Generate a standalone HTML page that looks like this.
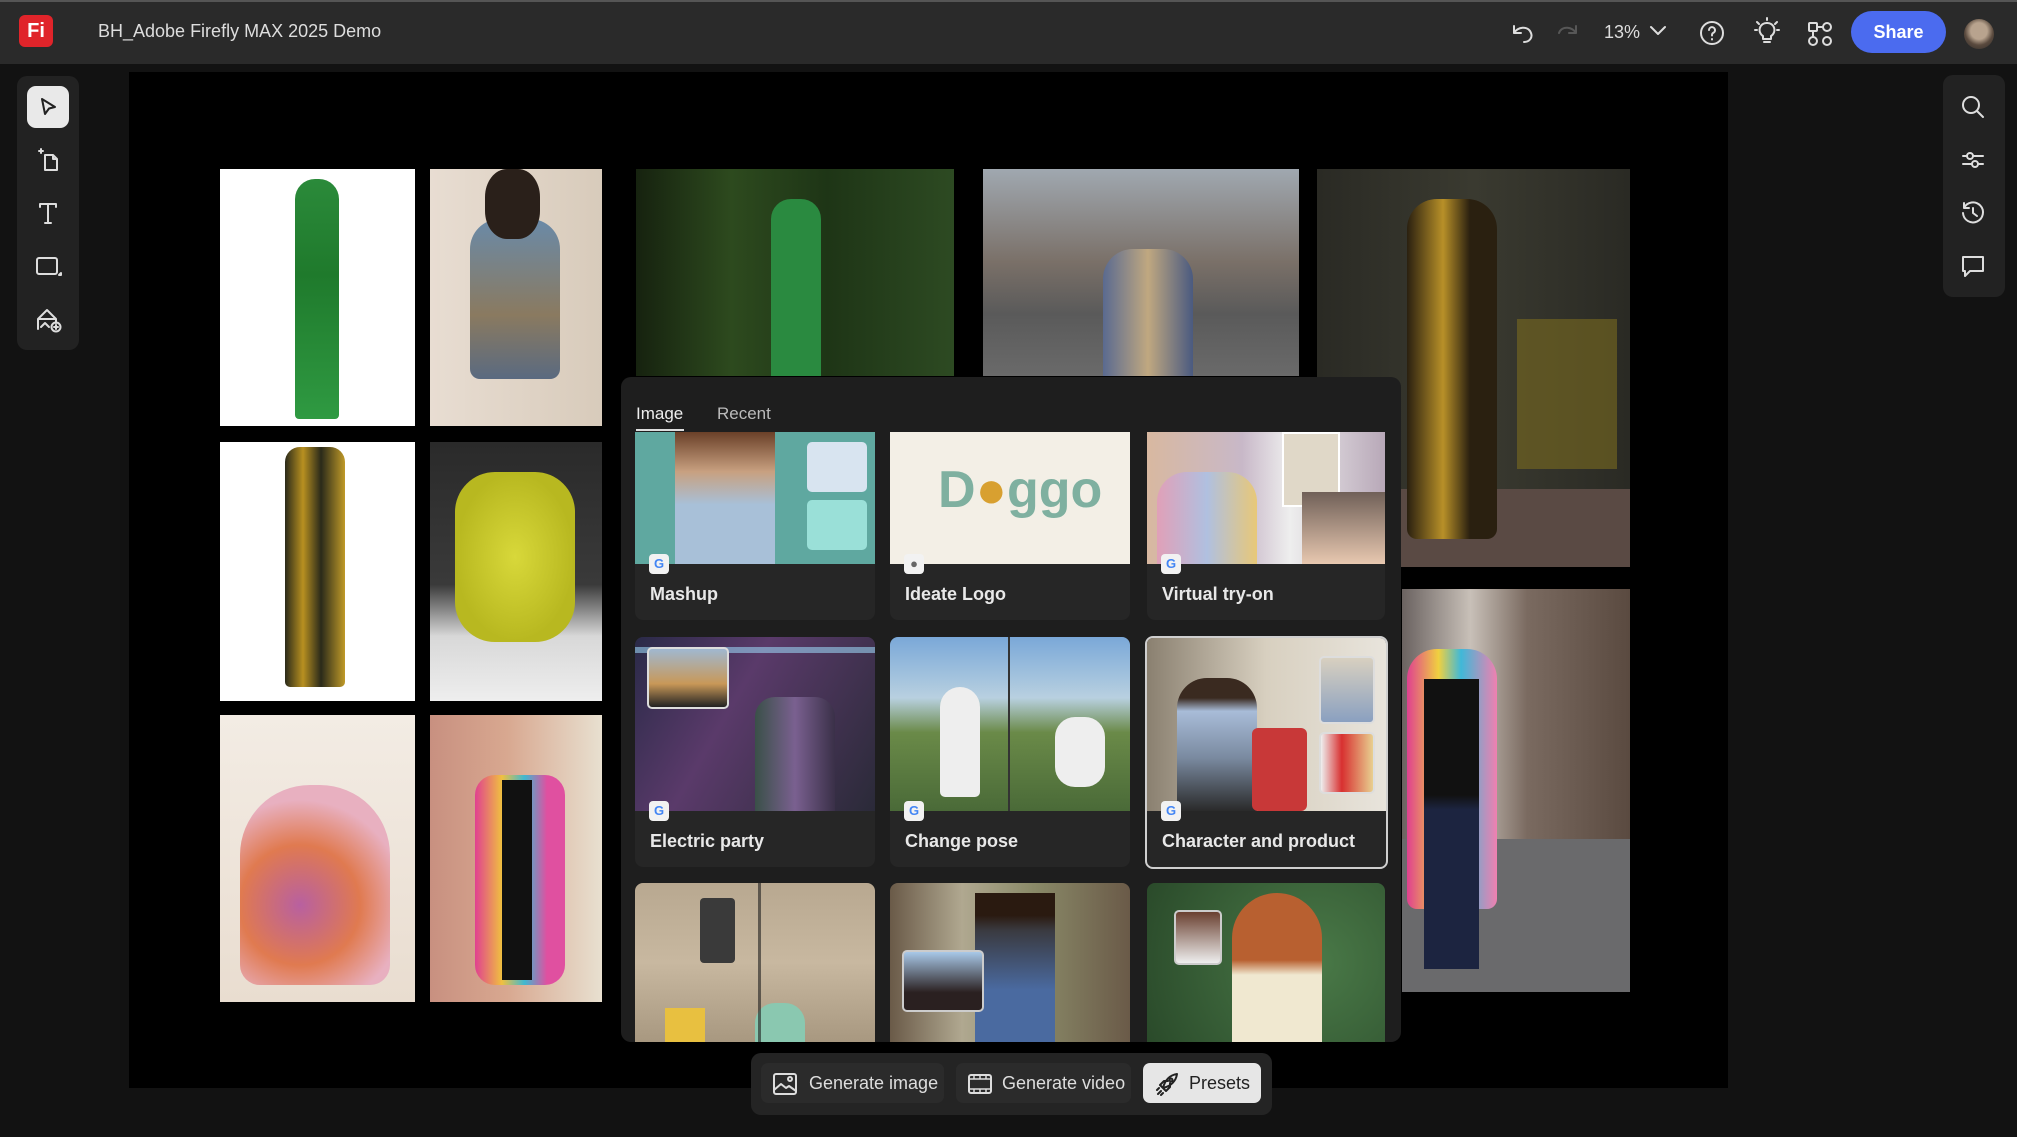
<!DOCTYPE html>
<html><head><meta charset="utf-8"><style>
*{margin:0;padding:0;box-sizing:border-box}
body{width:2017px;height:1137px;background:#121212;position:relative;overflow:hidden;font-family:"Liberation Sans",sans-serif;color:#e6e6e6}
.a{position:absolute}
.top{left:0;top:0;width:2017px;height:64px;background:#2a2a2a;border-top:2px solid #555}
.ico{position:absolute;stroke:#ddd;fill:none;stroke-width:2;stroke-linecap:round;stroke-linejoin:round}
.img{position:absolute;overflow:hidden}
.card{position:absolute;background:#262626;border-radius:8px;overflow:hidden}
.card .pic{position:absolute;left:0;top:0;right:0;overflow:hidden}
.card .lab{position:absolute;left:15px;font-size:18px;font-weight:bold;color:#e8e8e8}
.g{position:absolute;left:14px;width:20px;height:20px;background:#f2f2f2;border-radius:4px;font-size:13px;font-weight:bold;color:#4285f4;text-align:center;line-height:20px}
.btn{position:absolute;top:1063px;height:40px;border-radius:7px;font-size:18px;line-height:40px;color:#ddd;background:#2b2b2b}
</style></head><body>
<div class="a top"></div>
<div class="a" style="left:19px;top:15px;width:34px;height:32px;background:#e0242a;border-radius:6px;color:#fff;font-weight:bold;font-size:20px;text-align:center;line-height:32px">Fi</div>
<div class="a" style="left:98px;top:21px;font-size:18px;color:#ddd">BH_Adobe Firefly MAX 2025 Demo</div>
<svg class="ico" style="left:1510px;top:20px" width="26" height="26" viewBox="0 0 26 26"><path d="M4 6v7h7M4 13c3-6 14-8 17 0c2 5-2 9-7 9"/></svg>
<svg class="ico" style="left:1554px;top:20px;opacity:.25" width="26" height="26" viewBox="0 0 26 26"><path d="M22 6v7h-7M22 13c-3-6-14-8-17 0"/></svg>
<div class="a" style="left:1604px;top:22px;font-size:18px;color:#ddd">13%</div>
<svg class="ico" style="left:1648px;top:24px" width="20" height="14" viewBox="0 0 20 14"><path d="M3 3l7 7 7-7"/></svg>
<svg class="ico" style="left:1699px;top:20px" width="26" height="26" viewBox="0 0 26 26"><circle cx="13" cy="13" r="11"/><path d="M10 10a3 3 0 1 1 4 3c-1 .5-1 1.5-1 2.5M13 19v.5"/></svg>
<svg class="ico" style="left:1753px;top:17px" width="28" height="30" viewBox="0 0 28 30"><path d="M14 6a7 7 0 0 0-4 13v3h8v-3a7 7 0 0 0-4-13zM11 25h6M14 1v2M4 5l2 2M24 5l-2 2M2 13h2M24 13h2"/></svg>
<svg class="ico" style="left:1806px;top:20px" width="28" height="28" viewBox="0 0 28 28"><rect x="3" y="3" width="8" height="8" rx="1"/><circle cx="21" cy="7" r="4"/><circle cx="7" cy="21" r="4"/><circle cx="21" cy="21" r="4"/><path d="M7 11v6M11 7h6"/></svg>
<div class="a" style="left:1851px;top:11px;width:95px;height:42px;background:#4b6bef;border-radius:21px;color:#fff;font-weight:bold;font-size:18px;text-align:center;line-height:42px">Share</div>
<div class="a" style="left:1964px;top:19px;width:30px;height:30px;border-radius:50%;background:radial-gradient(circle at 50% 40%,#b8a38e 0 35%,#5a4a3e 60%,#2d2a28)"></div>

<!-- left toolbar -->
<div class="a" style="left:17px;top:76px;width:62px;height:274px;background:#222;border-radius:10px"></div>
<div class="a" style="left:27px;top:86px;width:42px;height:42px;background:#e9e9e9;border-radius:9px"></div>
<svg class="a" style="left:36px;top:95px" width="24" height="24" viewBox="0 0 24 24"><path d="M6 4l13 8-6 1.5-4 5.5z" fill="none" stroke="#222" stroke-width="2" stroke-linejoin="round"/></svg>
<svg class="ico" style="left:35px;top:147px" width="26" height="26" viewBox="0 0 26 26"><path d="M10 8h8l4 4v11H10zM18 8v4h4M4 4h4M6 2v4"/></svg>
<svg class="ico" style="left:35px;top:200px" width="26" height="26" viewBox="0 0 26 26"><path d="M5 4h16M13 4v19M10 23h6M5 4v3M21 4v3"/></svg>
<svg class="ico" style="left:35px;top:254px" width="28" height="26" viewBox="0 0 28 26"><rect x="2" y="4" width="20" height="16" rx="2"/><path d="M24 21l2-2v2z" fill="#ddd"/></svg>
<svg class="ico" style="left:35px;top:307px" width="28" height="26" viewBox="0 0 28 26"><path d="M3 22V12h18v4M3 12l9-9 9 9M6 20l4-4 4 4"/><circle cx="21" cy="20" r="4.5"/><path d="M21 18v4M19 20h4"/></svg>

<!-- right toolbar -->
<div class="a" style="left:1943px;top:75px;width:62px;height:222px;background:#222;border-radius:10px"></div>
<svg class="ico" style="left:1960px;top:94px" width="26" height="26" viewBox="0 0 26 26"><circle cx="11" cy="11" r="8"/><path d="M17 17l6 6"/></svg>
<svg class="ico" style="left:1960px;top:147px" width="26" height="26" viewBox="0 0 26 26"><path d="M3 9h20M3 17h20"/><circle cx="10" cy="9" r="3" fill="#222"/><circle cx="15" cy="17" r="3" fill="#222"/></svg>
<svg class="ico" style="left:1960px;top:200px" width="26" height="26" viewBox="0 0 26 26"><path d="M4 8a10 10 0 1 1-1 5M4 3v5h5M13 8v5l4 3"/></svg>
<svg class="ico" style="left:1960px;top:253px" width="26" height="26" viewBox="0 0 26 26"><path d="M3 4h20v14H10l-5 5v-5H3z"/></svg>

<!-- canvas -->
<div class="a" style="left:129px;top:72px;width:1599px;height:1016px;background:#000"></div>

<!-- images -->
<div class="img" style="left:220px;top:169px;width:195px;height:257px;background:#fff"><div class="a" style="left:75px;top:10px;width:44px;height:240px;background:linear-gradient(#2b8a3a,#1f7a2c 40%,#2f9a42);border-radius:20px 20px 4px 4px"></div></div>
<div class="img" style="left:430px;top:169px;width:172px;height:257px;background:linear-gradient(90deg,#e8ddd2,#d8cbbb)"><div class="a" style="left:40px;top:50px;width:90px;height:160px;background:linear-gradient(#6a8aa8,#8a7a60 60%,#5a6a80);border-radius:30px 30px 10px 10px"></div><div class="a" style="left:55px;top:0;width:55px;height:70px;background:#2a201a;border-radius:40%"></div></div>
<div class="img" style="left:220px;top:442px;width:195px;height:259px;background:#fff"><div class="a" style="left:65px;top:5px;width:60px;height:240px;background:linear-gradient(90deg,#2a2a1a,#b89020 30%,#2a2a1a 60%,#c09a28);border-radius:15px 15px 5px 5px"></div></div>
<div class="img" style="left:430px;top:442px;width:172px;height:259px;background:linear-gradient(#2a2a2a,#3a3a3a 55%,#d8d8d8 75%,#eee)"><div class="a" style="left:25px;top:30px;width:120px;height:170px;background:radial-gradient(#d8d83a,#b8b820 70%);border-radius:40px"></div></div>
<div class="img" style="left:220px;top:715px;width:195px;height:287px;background:linear-gradient(#f3ece4,#e9ddd0)"><div class="a" style="left:20px;top:70px;width:150px;height:200px;background:radial-gradient(circle at 40% 60%,#b860a0,#e07a50 40%,#e8b0c0 70%);border-radius:70px 70px 20px 20px"></div></div>
<div class="img" style="left:430px;top:715px;width:172px;height:287px;background:linear-gradient(90deg,#c89080,#d8a890 45%,#e8e0d0)"><div class="a" style="left:45px;top:60px;width:90px;height:210px;background:linear-gradient(90deg,#e04090,#f0c040 30%,#40b8d0 55%,#e050a0 80%);border-radius:20px"></div><div class="a" style="left:72px;top:65px;width:30px;height:200px;background:#111"></div></div>
<div class="img" style="left:636px;top:169px;width:318px;height:207px;background:linear-gradient(90deg,#16220f,#2d4a1e 30%,#1e3516 60%,#2d4a22)"><div class="a" style="left:135px;top:30px;width:50px;height:180px;background:#2a8a40;border-radius:20px 20px 0 0"></div></div>
<div class="img" style="left:983px;top:169px;width:316px;height:207px;background:linear-gradient(#a0a8b0,#7a7068 45%,#5a5a5a 70%,#6a6a6a)"><div class="a" style="left:120px;top:80px;width:90px;height:127px;background:linear-gradient(90deg,#5a6a90,#c0a880,#4a5a80);border-radius:30px 30px 0 0"></div></div>
<div class="img" style="left:1317px;top:169px;width:313px;height:398px;background:linear-gradient(90deg,#2a2a24,#3a3a30 50%,#2a2a24);"><div class="a" style="left:0;top:320px;width:313px;height:78px;background:#5a4a44"></div><div class="a" style="left:90px;top:30px;width:90px;height:340px;background:linear-gradient(90deg,#2a2010,#b89028 40%,#2a2010 70%);border-radius:30px 30px 10px 10px"></div><div class="a" style="left:200px;top:150px;width:100px;height:150px;background:#7a6a20;opacity:.6"></div></div>
<div class="img" style="left:1402px;top:589px;width:228px;height:403px;background:linear-gradient(90deg,#6a6260,#c8c0b8 30%,#7a6a60 55%,#5a4a40);"><div class="a" style="left:0;top:250px;width:228px;height:153px;background:#6a6a6c"></div><div class="a" style="left:5px;top:60px;width:90px;height:260px;background:linear-gradient(90deg,#e04090,#f0d040 35%,#40b8d8 60%,#f080b0);border-radius:30px 30px 10px 10px"></div><div class="a" style="left:22px;top:90px;width:55px;height:290px;background:linear-gradient(#111 40%,#1c2440 45%)"></div></div>

<!-- popup -->
<div class="a" style="left:621px;top:377px;width:780px;height:665px;background:#1e1e1e;border-radius:10px;overflow:hidden">
 <div class="a" style="left:15px;top:27px;font-size:17px;color:#eee">Image</div>
 <div class="a" style="left:96px;top:27px;font-size:17px;color:#bbb">Recent</div>
 <div class="a" style="left:15px;top:52px;width:48px;height:2px;background:#ddd"></div>
</div>
<!-- row1 -->
<div class="card" style="left:635px;top:432px;width:240px;height:188px;border-radius:0 0 8px 8px"><div class="pic" style="height:132px;background:#5fa8a0"><div class="a" style="left:40px;top:0;width:100px;height:132px;background:linear-gradient(#6a4028,#c8a080 30%,#a8c0d8 55%)"></div><div class="a" style="left:172px;top:10px;width:60px;height:50px;background:#d8e4f0;border-radius:5px"></div><div class="a" style="left:172px;top:68px;width:60px;height:50px;background:#9ae0d8;border-radius:5px"></div></div><div class="g" style="top:122px">G</div><div class="lab" style="top:152px">Mashup</div></div>
<div class="card" style="left:890px;top:432px;width:240px;height:188px;border-radius:0 0 8px 8px"><div class="pic" style="height:132px;background:#f3efe6"><div class="a" style="left:48px;top:28px;font-size:52px;font-weight:bold;color:#7fb0a0">D<span style="color:#d8a030">●</span>ggo</div></div><div class="g" style="top:122px;color:#666">●</div><div class="lab" style="top:152px">Ideate Logo</div></div>
<div class="card" style="left:1147px;top:432px;width:238px;height:188px;border-radius:0 0 8px 8px"><div class="pic" style="height:132px;background:linear-gradient(90deg,#d8b8a0,#c8b8c8 40%,#eee 60%,#b8a8b8)"><div class="a" style="left:10px;top:40px;width:100px;height:92px;background:linear-gradient(90deg,#e0a0b8,#b0c0e0 50%,#e8c878);border-radius:30px 30px 0 0"></div><div class="a" style="left:135px;top:0;width:58px;height:75px;background:#e0d8c8;border:2px solid #fff"></div><div class="a" style="left:155px;top:60px;width:83px;height:72px;background:linear-gradient(#706058,#e8c8b0)"></div></div><div class="g" style="top:122px">G</div><div class="lab" style="top:152px">Virtual try-on</div></div>
<!-- row2 -->
<div class="card" style="left:635px;top:637px;width:240px;height:230px"><div class="pic" style="height:174px;background:linear-gradient(120deg,#2a2a48,#5a3a6a 40%,#2a2a38)"><div class="a" style="left:0;top:10px;width:240px;height:6px;background:#9ad0f0;opacity:.6"></div><div class="a" style="left:12px;top:10px;width:82px;height:62px;background:linear-gradient(#a0b8d0,#c89858 60%,#222);border:2px solid #ddd;border-radius:5px"></div><div class="a" style="left:120px;top:60px;width:80px;height:114px;background:linear-gradient(90deg,#3a5048,#7a6090,#3a3048);border-radius:20px 20px 0 0"></div></div><div class="g" style="top:164px">G</div><div class="lab" style="top:194px">Electric party</div></div>
<div class="card" style="left:890px;top:637px;width:240px;height:230px"><div class="pic" style="height:174px;background:linear-gradient(#7aa8d8,#b8d0e0 35%,#6a8a48 55%,#4a6a38)"><div class="a" style="left:118px;top:0;width:2px;height:174px;background:#333"></div><div class="a" style="left:50px;top:50px;width:40px;height:110px;background:#eee;border-radius:20px 20px 5px 5px"></div><div class="a" style="left:165px;top:80px;width:50px;height:70px;background:#eee;border-radius:20px"></div></div><div class="g" style="top:164px">G</div><div class="lab" style="top:194px">Change pose</div></div>
<div class="card" style="left:1145px;top:636px;width:243px;height:233px;border:2px solid #cfcfcf"><div class="pic" style="height:173px;background:linear-gradient(90deg,#8a8070,#d8d0c0 50%,#e8e4dc)"><div class="a" style="left:30px;top:40px;width:80px;height:133px;background:linear-gradient(#3a2a20 15%,#a8bcd8 25%,#7a8aa0 60%,#2a2a2a);border-radius:30px 30px 0 0"></div><div class="a" style="left:105px;top:90px;width:55px;height:83px;background:#c83838;border-radius:6px"></div><div class="a" style="left:172px;top:18px;width:56px;height:68px;background:linear-gradient(#d8d0c0,#8aa0c0);border:2px solid #ddd;border-radius:5px"></div><div class="a" style="left:172px;top:94px;width:56px;height:62px;background:linear-gradient(90deg,#eee,#d83030 40%,#e8d090);border:2px solid #ddd;border-radius:5px"></div></div><div class="g" style="top:163px">G</div><div class="lab" style="top:193px">Character and product</div></div>
<!-- row3 -->
<div class="card" style="left:635px;top:883px;width:240px;height:159px;border-radius:8px 8px 0 0;background:linear-gradient(#b8a890,#c8b8a0 50%,#a89880)"><div class="a" style="left:65px;top:15px;width:35px;height:65px;background:#3a3a3a;border-radius:4px"></div><div class="a" style="left:120px;top:120px;width:50px;height:39px;background:#8ac8b0;border-radius:20px 20px 0 0"></div><div class="a" style="left:30px;top:125px;width:40px;height:34px;background:#e8c040"></div><div class="a" style="left:123px;top:0;width:3px;height:159px;background:#1e1e1e;opacity:.6"></div></div>
<div class="card" style="left:890px;top:883px;width:240px;height:159px;border-radius:8px 8px 0 0;background:linear-gradient(90deg,#6a5a48,#b0a890 30%,#8a8a68 60%,#6a5a48)"><div class="a" style="left:85px;top:10px;width:80px;height:149px;background:linear-gradient(#2a1a10 15%,#3a3a40 25%,#4a6aa0 65%)"></div><div class="a" style="left:12px;top:67px;width:82px;height:62px;background:linear-gradient(#a8c8e8,#2a2020 70%);border:2px solid #ccc;border-radius:5px"></div></div>
<div class="card" style="left:1147px;top:883px;width:238px;height:159px;border-radius:8px 8px 0 0;background:radial-gradient(circle at 70% 50%,#4a7a48,#2a4a2a)"><div class="a" style="left:85px;top:10px;width:90px;height:149px;background:linear-gradient(#b86030 45%,#f0e8d0 55%);border-radius:45px 45px 0 0"></div><div class="a" style="left:27px;top:27px;width:48px;height:55px;background:linear-gradient(#6a4030,#eee);border:2px solid #ccc;border-radius:5px"></div></div>

<!-- bottom bar -->
<div class="a" style="left:751px;top:1053px;width:521px;height:62px;background:#242424;border-radius:10px"></div>
<div class="btn" style="left:761px;width:183px"><svg class="ico" style="left:12px;top:10px" width="24" height="22" viewBox="0 0 24 22"><rect x="1" y="1" width="22" height="20" rx="2"/><path d="M1 17l7-6 5 4 3-2 7 5"/><circle cx="17" cy="6" r="2"/></svg><span style="position:absolute;left:48px">Generate image</span></div>
<div class="btn" style="left:956px;width:175px"><svg class="ico" style="left:12px;top:11px" width="24" height="20" viewBox="0 0 24 20"><rect x="1" y="1" width="22" height="18" rx="2"/><path d="M1 5h22M1 15h22M6 1v4M12 1v4M18 1v4M6 15v4M12 15v4M18 15v4" stroke-width="1.5"/></svg><span style="position:absolute;left:46px">Generate video</span></div>
<div class="btn" style="left:1143px;width:118px;background:#e6e6e6;color:#222"><svg class="ico" style="left:12px;top:9px;stroke:#222" width="24" height="24" viewBox="0 0 24 24"><path d="M8 16c2-8 7-13 14-14-1 7-6 12-14 14zM8 16l-3-3 4-4h4M11 19l-3-3M11 19l4-4v-4M3 22l3-3M2 18l2-2M6 23l2-2"/><circle cx="16" cy="8" r="1.5"/></svg><span style="position:absolute;left:46px">Presets</span></div>
</body></html>
